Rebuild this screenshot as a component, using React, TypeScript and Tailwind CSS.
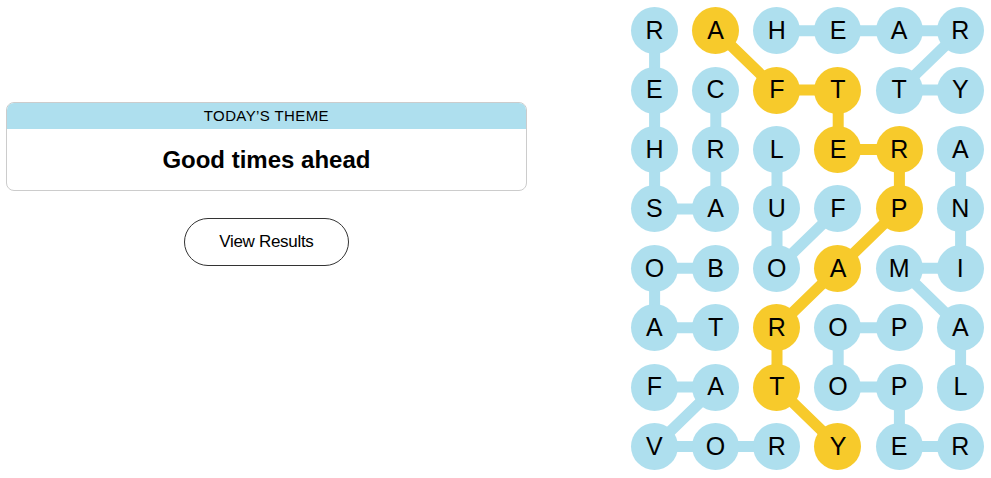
const letters = [
  "RAHEAR",
  "ECFTTY",
  "HRLERA",
  "SAUFPN",
  "OBOAMI",
  "ATROPA",
  "FATOPL",
  "VORYER",
];

const CELL_W = 61.2;
const CELL_H = 59.4;

// [row, col] paths
const spangram: [number, number][] = [
  [0, 1], [1, 2], [1, 3], [2, 3], [2, 4], [3, 4], [4, 3], [5, 2], [6, 2], [7, 3],
];

const words: [number, number][][] = [
  [[1, 1], [2, 1], [3, 1], [3, 0], [2, 0], [1, 0], [0, 0]],
  [[0, 2], [0, 3], [0, 4], [0, 5], [1, 4], [1, 5]],
  [[3, 3], [4, 2], [3, 2], [2, 2]],
  [[2, 5], [3, 5], [4, 5], [4, 4], [5, 5], [6, 5]],
  [[4, 1], [4, 0], [5, 0], [5, 1]],
  [[6, 0], [6, 1], [7, 0], [7, 1], [7, 2]],
  [[5, 4], [5, 3], [6, 3], [6, 4], [7, 4], [7, 5]],
];

const BLUE = "#aedfee";
const YELLOW = "#f7ca2b";

function pts(path: [number, number][]) {
  return path
    .map(([r, c]) => `${CELL_W / 2 + c * CELL_W},${CELL_H / 2 + r * CELL_H}`)
    .join(" ");
}

const isYellow = (r: number, c: number) =>
  spangram.some(([pr, pc]) => pr === r && pc === c);

function Board() {
  return (
    <div className="relative w-[367.2px] h-[475.2px] mt-[1px]">
      {/* connectors */}
      <svg className="absolute inset-0" width="367.2" height="475.2">
        {words.map((w, i) => (
          <polyline
            key={i}
            points={pts(w)}
            fill="none"
            stroke={BLUE}
            strokeWidth={11}
            strokeLinejoin="round"
          />
        ))}
        <polyline
          points={pts(spangram)}
          fill="none"
          stroke={YELLOW}
          strokeWidth={11}
          strokeLinejoin="round"
        />
      </svg>
      <div className="relative grid grid-cols-[repeat(6,61.2px)] grid-rows-[repeat(8,59.4px)]">
        {letters.map((row, r) =>
          row.split("").map((ch, c) => (
            <div key={`${r}-${c}`} className="flex items-center justify-center">
              <div
                className={`w-[47px] h-[47px] rounded-full flex items-center justify-center text-[25px] text-black ${
                  isYellow(r, c) ? "bg-[#f7ca2b]" : "bg-[#aedfee]"
                }`}
              >
                {ch}
              </div>
            </div>
          ))
        )}
      </div>
    </div>
  );
}

export default function App() {
  return (
    <div className="flex w-[991px] h-[478px] bg-white overflow-hidden font-['Liberation_Sans',Arial,sans-serif]">
      <div className="w-[533px] px-[6px] pt-[102px] flex flex-col">
        <div className="rounded-[8px] border border-[#cccccc] overflow-hidden">
          <div className="h-[26px] bg-[#aedfee] flex items-center justify-center text-[15px] tracking-[0.4px] text-black">
            TODAY’S THEME
          </div>
          <div className="h-[61px] flex items-center justify-center text-[24px] font-bold text-black">
            Good times ahead
          </div>
        </div>
        <button className="mt-[27px] mx-auto w-[165px] h-[48px] rounded-full border border-[#333] text-[17px] tracking-[-0.3px] text-black bg-white">
          View Results
        </button>
      </div>
      <div className="ml-[91px]">
        <Board />
      </div>
    </div>
  );
}
